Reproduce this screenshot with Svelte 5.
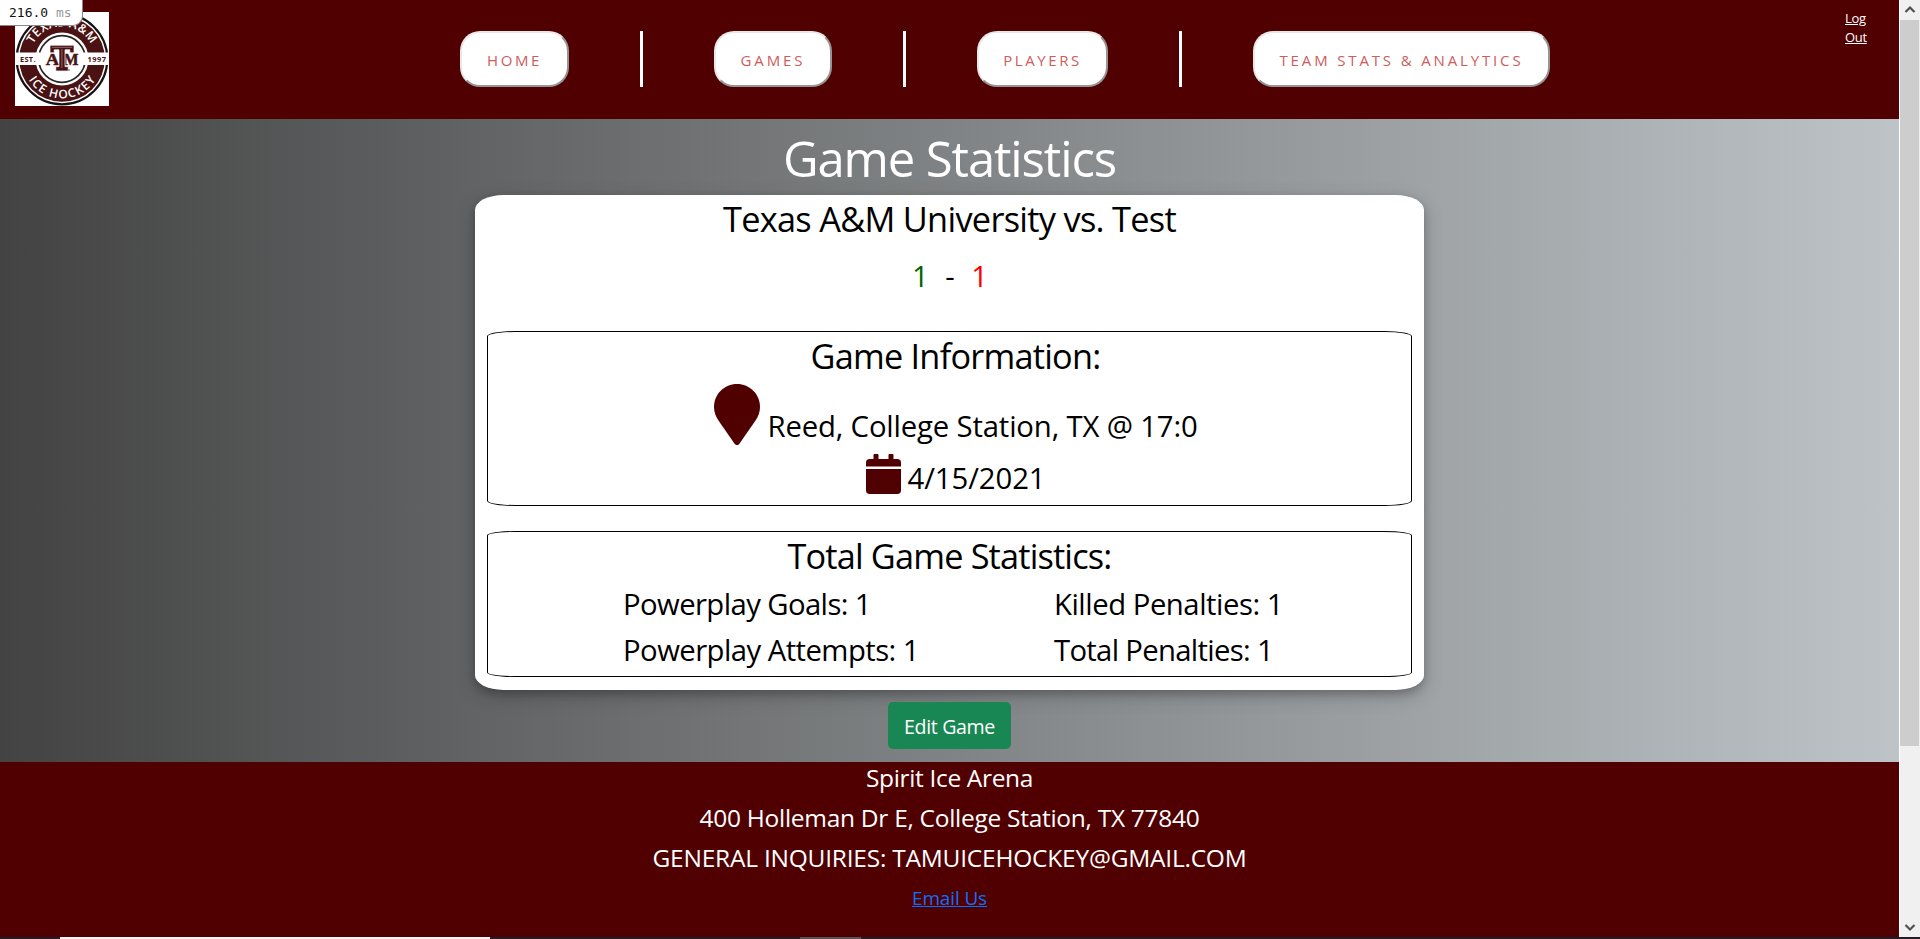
<script>
  const nav = [
    { label: 'HOME', box: 109, text: 55 },
    { label: 'GAMES', box: 118, text: 65 },
    { label: 'PLAYERS', box: 131, text: 78.5 },
    { label: 'TEAM STATS & ANALYTICS', box: 297, text: 244 }
  ];
  const stats = [
    { label: 'Powerplay Goals: 1', width: 248 },
    { label: 'Killed Penalties: 1', width: 229 },
    { label: 'Powerplay Attempts: 1', width: 296 },
    { label: 'Total Penalties: 1', width: 219 }
  ];

  // Tracks a line of text so that it sets to the given width.
  function fit(node, width) {
    const natural = node.getBoundingClientRect().width;
    node.style.letterSpacing = (width - natural) / node.textContent.length + 'px';
  }
</script>

<div class="window">
  <div class="page">
    <header>
      <svg class="logo" viewBox="0 0 94 94" width="94" height="94">
        <defs>
          <path id="arc-top" d="M14.5 47a32.5 32.5 0 0 1 65 0" />
          <path id="arc-bottom" d="M7.5 47a39.5 39.5 0 0 0 79 0" />
        </defs>
        <rect width="94" height="94" fill="#fff" />
        <circle cx="47" cy="47" r="45.3" fill="#fff" stroke="#161314" stroke-width="2.2" />
        <circle cx="47" cy="47" r="42.8" fill="#4b1213" />
        <circle cx="47" cy="47" r="26.5" fill="#fff" />
        <circle cx="47" cy="47" r="23.3" fill="none" stroke="#2b2526" stroke-width="1.7" />
        <rect x="0" y="40.5" width="94" height="12.5" fill="#fff" />
        <g fill="#fff" font-size="12" font-weight="600" text-anchor="middle">
          <text><textPath href="#arc-top" startOffset="50%" textLength="71">TEXAS A&amp;M</textPath></text>
          <text><textPath href="#arc-bottom" startOffset="50%" textLength="80">ICE HOCKEY</textPath></text>
        </g>
        <g fill="#4b1213" font-size="7.4" font-weight="700">
          <text x="5" y="49.6" textLength="15.5">EST.</text>
          <text x="72.5" y="49.6" textLength="18.5">1997</text>
        </g>
        <g fill="#4b1213" stroke="#4b1213" stroke-width=".5" font-family="Liberation Serif, serif" font-weight="700" font-size="16">
          <text x="30.8" y="52.7" textLength="13.5" lengthAdjust="spacingAndGlyphs">A</text>
          <text x="48.500" y="52.7" textLength="15" lengthAdjust="spacingAndGlyphs">M</text>
        </g>
        <path d="M35 33.2h24v7.600h-4.200v-3h-4.800v16.800h3.200v4.400H40.800v-4.400H44V37.800h-4.800v3H35z" fill="#4b1213" stroke="#fff" stroke-width=".7" />
        <path d="M37 35.3h20M46.9 37v19" stroke="#a98b8b" stroke-width=".7" fill="none" />
        <circle cx="54" cy="58" r=".7" fill="#4b1213" />
      </svg>
      <nav>
        {#each nav as item, i}
          {#if i > 0}<span class="rule"></span>{/if}
          <button style="width: {item.box}px"><span use:fit={item.text}>{item.label}</span></button>
        {/each}
      </nav>
      <a class="logout" href="#logout">Log Out</a>
      <div class="timer">216.0 <span>ms</span></div>
    </header>

    <main>
      <h1><span use:fit={333}>Game Statistics</span></h1>
      <section class="card">
        <h2><span use:fit={453}>Texas A&amp;M University vs. Test</span></h2>
        <div class="score"><span class="home">1</span><span class="dash">-</span><span class="away">1</span></div>

        <div class="panel info">
          <h2><span use:fit={290}>Game Information:</span></h2>
          <div class="row place">
            <svg width="46" height="61" viewBox="0 0 46 61"><path d="M23 0C10.3 0 0 10.3 0 22.9c0 5.3 1.800 9.600 4.800 14.200L20.600 59.700c1.200 1.700 3.600 1.700 4.800 0L41.200 37.100c3-4.600 4.800-8.900 4.800-14.200C46 10.300 35.700 0 23 0z" fill="#500000" /></svg>
            <span><span use:fit={430}>Reed, College Station, TX @ 17:0</span></span>
          </div>
          <div class="row date">
            <svg width="35" height="40" viewBox="0 0 35 40"><path d="M0 12.500V8.750A3.750 3.750 0 0 1 3.750 5H7.500V.9Q7.500 0 8.400 0h3.200q.9 0 .9.900V5h10V.9q0-.9.9-.9h3.200q.9 0 .9.900V5h3.750A3.750 3.750 0 0 1 35 8.750v3.750zM0 15h35v21.250A3.750 3.750 0 0 1 31.250 40H3.750A3.750 3.750 0 0 1 0 36.250z" fill="#500000" /></svg>
            <span><span use:fit={138}>4/15/2021</span></span>
          </div>
        </div>

        <div class="panel totals">
          <h2><span use:fit={324}>Total Game Statistics:</span></h2>
          <div class="stats">
            {#each stats as s}
              <div><span use:fit={s.width}>{s.label}</span></div>
            {/each}
          </div>
        </div>
      </section>
      <button class="edit"><span use:fit={91}>Edit Game</span></button>
    </main>

    <footer>
      <p><span use:fit={167}>Spirit Ice Arena</span></p>
      <p><span use:fit={500}>400 Holleman Dr E, College Station, TX 77840</span></p>
      <p><span use:fit={594}>GENERAL INQUIRIES: TAMUICEHOCKEY@GMAIL.COM</span></p>
      <p class="mail"><a href="#email" use:fit={75}>Email Us</a></p>
    </footer>
  </div>

  <div class="scrollbar">
    <svg width="20" height="20" viewBox="0 0 20 20"><path d="M5.500 12L10 7.500l4.500 4.500" /></svg>
    <div class="thumb"></div>
    <svg class="down" width="20" height="20" viewBox="0 0 20 20"><path d="M5.500 8L10 12.500 14.500 8" /></svg>
  </div>
  <div class="taskbar"><i class="light"></i><i class="gray"></i></div>
</div>

<style>
  :global(body) { margin: 0; overflow: hidden; }
  .window {
    display: grid;
    grid-template: 937px 2px / 1899px 21px;
    width: 1920px;
    height: 939px;
    overflow: hidden;
    font-family: 'Open Sans', 'Noto Sans', sans-serif;
    color: #000;
  }
  .page { display: flex; flex-direction: column; }
  header {
    position: relative;
    display: flex;
    align-items: flex-start;
    box-sizing: border-box;
    height: 119px;
    padding: 12px 0 0 15px;
    background: #500000;
  }
  .logo { display: block; }
  nav { display: flex; gap: 71px; margin: 19px 0 0 351px; }
  nav button {
    box-sizing: border-box;
    height: 56px;
    padding: 2px 0 0;
    border: 2px solid;
    border-color: #e8e8e8 #959595 #959595 #e8e8e8;
    border-radius: 20px;
    background: #fff;
    color: #cd5c5c;
    font: 400 15px/50px 'Open Sans', sans-serif;
    white-space: nowrap;
  }
  .rule { width: 3px; height: 56px; background: #fff; }
  .logout {
    width: 30px;
    margin: -3px 0 0 295px;
    color: #fff;
    font-size: 13px;
    line-height: 19px;
    letter-spacing: -.3px;
  }
  .timer {
    position: absolute;
    left: 0;
    top: 0;
    box-sizing: border-box;
    width: 83px;
    height: 26px;
    padding-left: 9px;
    border: solid #888;
    border-width: 0 1px 1px 0;
    border-radius: 0 0 10px 0;
    background: #fff;
    color: #111;
    font: 13px/25px 'DejaVu Sans Mono', monospace;
    white-space: nowrap;
  }
  .timer span { color: #999; }

  main {
    display: flex;
    flex-direction: column;
    align-items: center;
    height: 643px;
    background: linear-gradient(to right, #434343, #bdc3c7);
  }
  h1, h2, p { margin: 0; font-weight: 400; text-align: center; white-space: nowrap; }
  h1 { height: 76px; color: #fff; font-size: 49px; line-height: 78px; }
  h2 { height: 45px; font-size: 34.300px; line-height: 47px; }
  .card {
    box-sizing: border-box;
    width: 949px;
    height: 495px;
    padding: 0 12px;
    border-radius: 3%;
    background: #fff;
    box-shadow: 0 4px 8px rgba(0, 0, 0, .2), 0 6px 20px rgba(0, 0, 0, .19);
    font-size: 29.300px;
  }
  .score { display: flex; justify-content: center; gap: 16.500px; height: 71px; padding-left: 1px; line-height: 73px; }
  .home { color: #006400; }
  .away { color: #f00; }
  .panel { box-sizing: border-box; border: 1px solid #000; border-radius: 3%; }
  .info { height: 175px; margin-top: 20px; padding-left: 12px; }
  .totals { height: 146px; margin-top: 25px; }
  .row { display: flex; justify-content: center; align-items: flex-end; white-space: nowrap; }
  .place { gap: 8px; height: 61px; padding-top: 7px; }
  .place > span { height: 39px; line-height: 41px; }
  .date { gap: 7px; height: 40px; margin-top: 9px; }
  .date > span { height: 33px; line-height: 35px; }
  .stats {
    display: grid;
    grid-template-columns: 431px 1fr;
    grid-auto-rows: 46px;
    padding: 4px 0 0 135px;
    line-height: 46px;
    white-space: nowrap;
  }
  .edit {
    width: 123px;
    height: 47px;
    margin-top: 12px;
    padding: 2px 0 0;
    border: 0;
    border-radius: 5px;
    background: #198754;
    color: #fff;
    font: 400 19.600px/45px 'Open Sans', sans-serif;
    white-space: nowrap;
  }
  footer {
    display: flex;
    flex-direction: column;
    gap: 10px;
    box-sizing: border-box;
    height: 175px;
    padding-top: 1px;
    background: #500000;
    color: #fff;
    font-size: 24.500px;
    line-height: 30px;
  }
  .mail { font-size: 19px; }
  .mail a { color: #0d6efd; }

  .scrollbar {
    display: flex;
    flex-direction: column;
    box-sizing: border-box;
    border-left: 1px solid #fff;
    background: #f0f0f0;
  }
  .scrollbar path { fill: none; stroke: #505050; stroke-width: 2.200; }
  .thumb { width: 19px; height: 726px; background: #cdcdcd; }
  .down { margin-top: auto; }
  .taskbar { display: flex; grid-column: 1 / -1; background: #241c24; }
  .light { width: 430px; margin-left: 60px; background: #f5f5f5; }
  .gray { width: 61px; margin-left: 310px; background: #555; }
</style>
